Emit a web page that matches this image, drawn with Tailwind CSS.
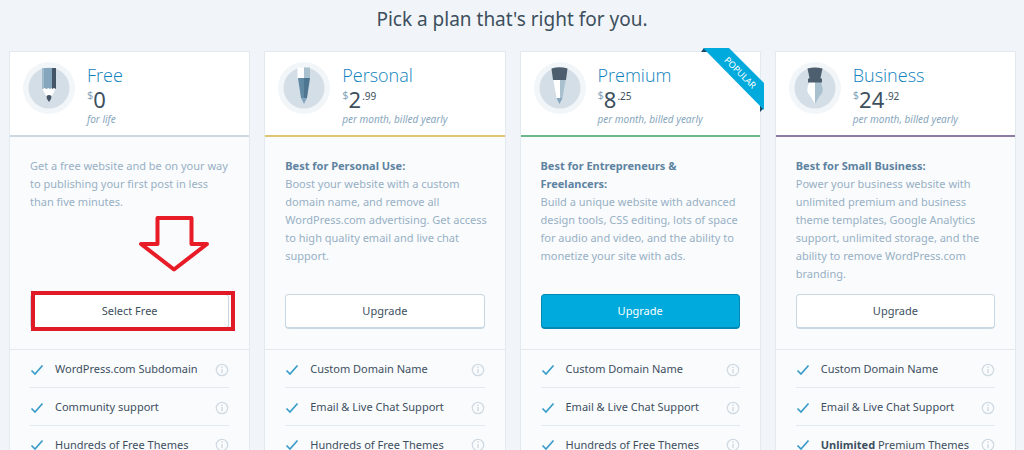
<!DOCTYPE html>
<html lang="en">
  <head>
    <meta charset="UTF-8" />
    <meta name="viewport" content="width=device-width, initial-scale=1.0" />
    <title>Pick a plan</title>
    <script src="https://cdn.jsdelivr.net/npm/@tailwindcss/browser@4"></script>
  </head>
  <body class="h-screen overflow-hidden bg-[#f1f5f9] font-['Noto_Sans',sans-serif] text-[#3d4f5d]">
    <!-- Shared icons -->
    <svg class="hidden" xmlns="http://www.w3.org/2000/svg">
      <symbol id="check" viewBox="0 0 14 12">
        <path d="M1.5 6.5 5 10 12.5 1.5" fill="none" stroke="#3a9dc9" stroke-width="1.7" />
      </symbol>
      <symbol id="info" viewBox="0 0 14 14">
        <circle cx="7" cy="7" r="5.7" fill="none" stroke="#cfdae2" stroke-width="1.3" />
        <path d="M7 6v4.2M7 3.6v1.3" stroke="#cfdae2" stroke-width="1.4" />
      </symbol>
    </svg>

    <h1 class="pt-1 text-center text-[19px] leading-[30px]">Pick a plan that's right for you.</h1>

    <main class="mt-[17px] grid grid-cols-4 items-start gap-[14px] pr-2 pl-[9px]">
      <!-- Free -->
      <section class="border border-[#e2eaf0] bg-[#fafbfd]">
        <header class="flex h-[85px] border-b-2 border-[#ccd8e2] bg-white pt-[10px] pl-[13px]">
          <svg class="size-[52px] shrink-0" viewBox="0 0 52 52">
            <circle cx="26" cy="26" r="26" fill="#f2f6f9" />
            <circle cx="26" cy="26" r="20.5" fill="#d3dee7" />
            <path d="M19 26h14l-4.500 9h-5z" fill="#fff" />
            <path d="M19 6h10v20l-2 1-1.500-1-2 1-2-1-2.500 1z" fill="#86a6bd" />
            <path d="M19 6h2v20l-2 1z" fill="#a3bccd" />
            <path d="M29 6h4v21l-2-1-2 1z" fill="#445566" />
            <path d="M23.500 34q2.500-2 5 0l-.5 3-2 3-2-3z" fill="#445566" />
          </svg>
          <div class="pl-3">
            <h2 class="pt-px font-['Open_Sans',sans-serif] text-[18px] leading-6 font-light text-[#0f82bd]">Free</h2>
            <p class="flex items-start leading-6">
              <span class="text-[11px] leading-4 text-[#87a6bc]">$</span>
              <span class="text-[22px]">0</span>
            </p>
            <p class="text-[10px] leading-4 text-[#87a6bc] italic">for life</p>
          </div>
        </header>
        <div class="relative flex h-[213px] flex-col justify-between border-b border-[#e2eaf0] px-5 pt-5 pb-5">
          <p class="-mr-1 text-[11px] leading-[18px] text-[#97b0c4]">Get a free website and be on your way to publishing your first post in less than five minutes.</p>
          <button type="button" class="h-[35px] w-full rounded border border-b-2 border-[#c8d7e1] bg-white text-[11px]">Select Free</button>
          <!-- Pointer to the free plan -->
          <svg class="absolute top-[77px] left-[128px] h-[60px] w-[72px]" viewBox="0 0 72 60">
            <path d="M19.500 4h34v26H69L36 55.500 3 30h16.500z" fill="#fafbfd" stroke="#e81c27" stroke-width="4" stroke-linejoin="round" />
          </svg>
          <div class="pointer-events-none absolute right-3.5 bottom-[18px] left-[21px] h-10 border-4 border-[#e01b27]"></div>
        </div>
        <ul class="px-5 text-[11px]">
          <li class="flex h-[38px] items-center border-b border-[#e2eaf0] pt-0.5">
            <svg class="h-3 w-[14px]"><use href="#check" /></svg>
            <span class="flex-1 pl-[11px]">WordPress.com Subdomain</span>
            <svg class="size-[14px]"><use href="#info" /></svg>
          </li>
          <li class="flex h-[38px] items-center border-b border-[#e2eaf0] pt-0.5">
            <svg class="h-3 w-[14px]"><use href="#check" /></svg>
            <span class="flex-1 pl-[11px]">Community support</span>
            <svg class="size-[14px]"><use href="#info" /></svg>
          </li>
          <li class="flex h-[38px] items-center">
            <svg class="h-3 w-[14px]"><use href="#check" /></svg>
            <span class="flex-1 pl-[11px]">Hundreds of Free Themes</span>
            <svg class="size-[14px]"><use href="#info" /></svg>
          </li>
        </ul>
      </section>

      <!-- Personal -->
      <section class="border border-[#e2eaf0] bg-[#fafbfd]">
        <header class="flex h-[85px] border-b-2 border-[#e0c673] bg-white pt-[10px] pl-[13px]">
          <svg class="size-[52px] shrink-0" viewBox="0 0 52 52">
            <circle cx="26" cy="26" r="26" fill="#f2f6f9" />
            <circle cx="26" cy="26" r="20.5" fill="#d3dee7" />
            <path d="M19.500 5.500h6.500v11h-6.500z" fill="#fff" />
            <path d="M26 5.500h6v11h-6z" fill="#a9c0cf" />
            <path d="M20 16h6v20h-3z" fill="#6089a4" />
            <path d="M26 16h6l-3 20h-3z" fill="#4e7690" />
            <path d="M23 36h6l-3 6z" fill="#86a6bd" />
          </svg>
          <div class="pl-3">
            <h2 class="pt-px font-['Open_Sans',sans-serif] text-[18px] leading-6 font-light text-[#0f82bd]">Personal</h2>
            <p class="flex items-start leading-6">
              <span class="text-[11px] leading-4 text-[#87a6bc]">$</span>
              <span class="text-[22px]">2</span>
              <span class="pl-px text-[10px] leading-[18px]">.99</span>
            </p>
            <p class="text-[10px] leading-4 text-[#87a6bc] italic">per month, billed yearly</p>
          </div>
        </header>
        <div class="flex h-[213px] flex-col justify-between border-b border-[#e2eaf0] px-5 pt-5 pb-5">
          <p class="-mr-1 text-[11px] leading-[18px] text-[#97b0c4]"><strong class="block text-[#5d83a1]">Best for Personal Use:</strong>Boost your website with a custom domain name, and remove all WordPress.com advertising. Get access to high quality email and live chat support.</p>
          <button type="button" class="h-[35px] w-full rounded border border-b-2 border-[#c8d7e1] bg-white text-[11px]">Upgrade</button>
        </div>
        <ul class="px-5 text-[11px]">
          <li class="flex h-[38px] items-center border-b border-[#e2eaf0] pt-0.5">
            <svg class="h-3 w-[14px]"><use href="#check" /></svg>
            <span class="flex-1 pl-[11px]">Custom Domain Name</span>
            <svg class="size-[14px]"><use href="#info" /></svg>
          </li>
          <li class="flex h-[38px] items-center border-b border-[#e2eaf0] pt-0.5">
            <svg class="h-3 w-[14px]"><use href="#check" /></svg>
            <span class="flex-1 pl-[11px]">Email &amp; Live Chat Support</span>
            <svg class="size-[14px]"><use href="#info" /></svg>
          </li>
          <li class="flex h-[38px] items-center">
            <svg class="h-3 w-[14px]"><use href="#check" /></svg>
            <span class="flex-1 pl-[11px]">Hundreds of Free Themes</span>
            <svg class="size-[14px]"><use href="#info" /></svg>
          </li>
        </ul>
      </section>

      <!-- Premium -->
      <section class="relative border border-[#e2eaf0] bg-[#fafbfd]">
        <!-- Ribbon -->
        <svg class="absolute -top-1 -right-1 size-16" viewBox="0 0 64 64">
          <path d="M1 4 4 0h4v4zM60 64l4-4v-5h-4z" fill="#1b4a68" />
          <path d="M3 0h26l35 35v27z" fill="#00aadc" />
          <text x="38" y="27" transform="rotate(45 38 27)" text-anchor="middle" font-size="9" fill="#fff">POPULAR</text>
        </svg>
        <header class="flex h-[85px] border-b-2 border-[#6bb88a] bg-white pt-[10px] pl-[13px]">
          <svg class="size-[52px] shrink-0" viewBox="0 0 52 52">
            <circle cx="26" cy="26" r="26" fill="#f2f6f9" />
            <circle cx="26" cy="26" r="20.5" fill="#d3dee7" />
            <path d="M19 16h7v20h-3.500z" fill="#fff" />
            <path d="M26 16h6l-3.500 20H26z" fill="#a9c0cf" />
            <path d="M22.500 36h6L25.500 42z" fill="#86a6bd" />
            <path d="M17.500 6.500q8-2.500 16 0l-1.500 11.500H19z" fill="#4d5e6e" />
          </svg>
          <div class="pl-3">
            <h2 class="pt-px font-['Open_Sans',sans-serif] text-[18px] leading-6 font-light text-[#0f82bd]">Premium</h2>
            <p class="flex items-start leading-6">
              <span class="text-[11px] leading-4 text-[#87a6bc]">$</span>
              <span class="text-[22px]">8</span>
              <span class="pl-px text-[10px] leading-[18px]">.25</span>
            </p>
            <p class="text-[10px] leading-4 text-[#87a6bc] italic">per month, billed yearly</p>
          </div>
        </header>
        <div class="flex h-[213px] flex-col justify-between border-b border-[#e2eaf0] px-5 pt-5 pb-5">
          <p class="-mr-1 text-[11px] leading-[18px] text-[#97b0c4]"><strong class="block text-[#5d83a1]">Best for Entrepreneurs &amp; Freelancers:</strong>Build a unique website with advanced design tools, CSS editing, lots of space for audio and video, and the ability to monetize your site with ads.</p>
          <button type="button" class="h-[35px] w-full rounded border border-b-2 border-[#008ab3] bg-[#00aadc] text-[11px] text-white">Upgrade</button>
        </div>
        <ul class="px-5 text-[11px]">
          <li class="flex h-[38px] items-center border-b border-[#e2eaf0] pt-0.5">
            <svg class="h-3 w-[14px]"><use href="#check" /></svg>
            <span class="flex-1 pl-[11px]">Custom Domain Name</span>
            <svg class="size-[14px]"><use href="#info" /></svg>
          </li>
          <li class="flex h-[38px] items-center border-b border-[#e2eaf0] pt-0.5">
            <svg class="h-3 w-[14px]"><use href="#check" /></svg>
            <span class="flex-1 pl-[11px]">Email &amp; Live Chat Support</span>
            <svg class="size-[14px]"><use href="#info" /></svg>
          </li>
          <li class="flex h-[38px] items-center">
            <svg class="h-3 w-[14px]"><use href="#check" /></svg>
            <span class="flex-1 pl-[11px]">Hundreds of Free Themes</span>
            <svg class="size-[14px]"><use href="#info" /></svg>
          </li>
        </ul>
      </section>

      <!-- Business -->
      <section class="border border-[#e2eaf0] bg-[#fafbfd]">
        <header class="flex h-[85px] border-b-2 border-[#8d7ba6] bg-white pt-[10px] pl-[13px]">
          <svg class="size-[52px] shrink-0" viewBox="0 0 52 52">
            <circle cx="26" cy="26" r="26" fill="#f2f6f9" />
            <circle cx="26" cy="26" r="20.5" fill="#d3dee7" />
            <path d="M20.500 20H26v22q-3-6-7-11-2-4 1.500-11z" fill="#fff" />
            <path d="M26 20h5.500q3.500 7 1.500 11-4 5-7 11z" fill="#a9c0cf" />
            <path d="M18.500 6.500q7.500-2 15 0L31.500 16l1.500 1v3.500H19V17l1.500-1z" fill="#4d5e6e" />
          </svg>
          <div class="pl-3">
            <h2 class="pt-px font-['Open_Sans',sans-serif] text-[18px] leading-6 font-light text-[#0f82bd]">Business</h2>
            <p class="flex items-start leading-6">
              <span class="text-[11px] leading-4 text-[#87a6bc]">$</span>
              <span class="text-[22px]">24</span>
              <span class="pl-px text-[10px] leading-[18px]">.92</span>
            </p>
            <p class="text-[10px] leading-4 text-[#87a6bc] italic">per month, billed yearly</p>
          </div>
        </header>
        <div class="flex h-[213px] flex-col justify-between border-b border-[#e2eaf0] px-5 pt-5 pb-5">
          <p class="-mr-1 text-[11px] leading-[18px] text-[#97b0c4]"><strong class="block text-[#5d83a1]">Best for Small Business:</strong>Power your business website with unlimited premium and business theme templates, Google Analytics support, unlimited storage, and the ability to remove WordPress.com branding.</p>
          <button type="button" class="h-[35px] w-full rounded border border-b-2 border-[#c8d7e1] bg-white text-[11px]">Upgrade</button>
        </div>
        <ul class="px-5 text-[11px]">
          <li class="flex h-[38px] items-center border-b border-[#e2eaf0] pt-0.5">
            <svg class="h-3 w-[14px]"><use href="#check" /></svg>
            <span class="flex-1 pl-[11px]">Custom Domain Name</span>
            <svg class="size-[14px]"><use href="#info" /></svg>
          </li>
          <li class="flex h-[38px] items-center border-b border-[#e2eaf0] pt-0.5">
            <svg class="h-3 w-[14px]"><use href="#check" /></svg>
            <span class="flex-1 pl-[11px]">Email &amp; Live Chat Support</span>
            <svg class="size-[14px]"><use href="#info" /></svg>
          </li>
          <li class="flex h-[38px] items-center">
            <svg class="h-3 w-[14px]"><use href="#check" /></svg>
            <span class="flex-1 pl-[11px]"><strong>Unlimited</strong> Premium Themes</span>
            <svg class="size-[14px]"><use href="#info" /></svg>
          </li>
        </ul>
      </section>
    </main>
  </body>
</html>
